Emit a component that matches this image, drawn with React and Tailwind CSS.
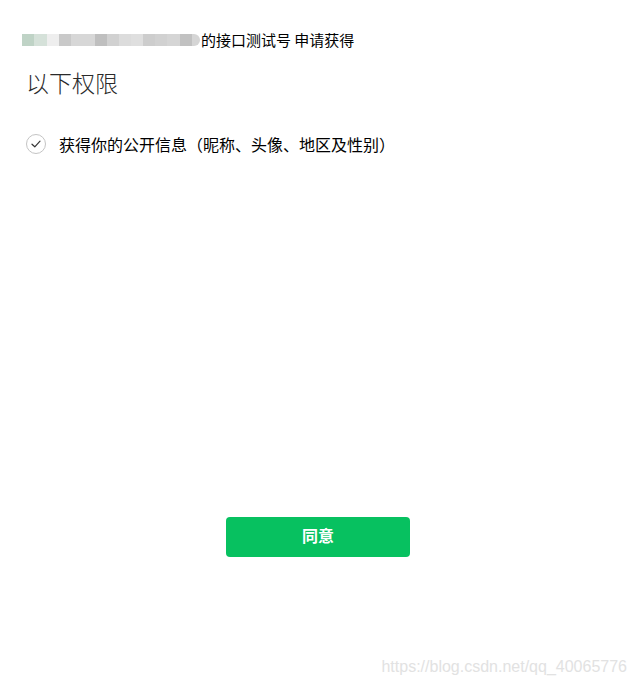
import React from 'react';

const blurBlocks = [
  ['w-[12px]', 'bg-[#bfd3c6]'],
  ['w-[13px]', 'bg-[#d5e1d9]'],
  ['w-[12px]', 'bg-[#eeeeee]'],
  ['w-[12px]', 'bg-[#c9c9c9]'],
  ['w-[24px]', 'bg-[#d7d7d7]'],
  ['w-[12px]', 'bg-[#bfbfbf]'],
  ['w-[12px]', 'bg-[#d1d1d1]'],
  ['w-[12px]', 'bg-[#dcdcdc]'],
  ['w-[12px]', 'bg-[#dfdfdf]'],
  ['w-[12px]', 'bg-[#cdcdcd]'],
  ['w-[12px]', 'bg-[#d1d1d1]'],
  ['w-[13px]', 'bg-[#d5d5d5]'],
  ['w-[12px]', 'bg-[#c1c1c1]'],
  ['w-[8px]', 'bg-[#d5d5d5] rounded-r-full'],
];

const App = () => {
  return (
    <div
      className="w-[636px] h-[687px] bg-white relative overflow-hidden text-black"
      style={{ fontFamily: '"Noto Sans CJK SC", "Noto Sans", sans-serif' }}
    >
      {/* Header line */}
      <div className="pt-[30px] pl-[22px] flex items-center h-[50px]">
        <div className="flex h-[12px] items-stretch">
          {blurBlocks.map(([w, c], i) => (
            <div key={i} className={`${w} ${c}`} />
          ))}
        </div>
        <span className="text-[15px] leading-[20px] ml-[1px]">的接口测试号 申请获得</span>
      </div>

      {/* Title */}
      <div className="pl-[26px] mt-[17px] text-[23px] leading-[30px] text-[#2a2a2a] font-light">
        以下权限
      </div>

      {/* Permission item */}
      <div className="pl-[26px] mt-[36px] flex items-center">
        <div className="w-[20px] h-[20px] rounded-full border border-[#c4c4c4] flex items-center justify-center">
          <svg width="10" height="8" viewBox="0 0 10 8" fill="none">
            <path d="M1 4.2L3.8 6.8L9 1.2" stroke="#333" strokeWidth="1.2" strokeLinecap="round" strokeLinejoin="round" />
          </svg>
        </div>
        <span className="ml-[13px] text-[16px] leading-[22px]">获得你的公开信息（昵称、头像、地区及性别）</span>
      </div>

      {/* Button */}
      <div className="flex justify-center mt-[362px]">
        <button className="w-[184px] h-[40px] pb-[5px] rounded-[4px] bg-[#07c160] text-white text-[16px] font-bold">
          同意
        </button>
      </div>

      {/* Watermark */}
      <div
        className="absolute right-[9px] bottom-[8px] text-[16px] text-[#e2e2e2]"
        style={{ fontFamily: 'Arial, "Liberation Sans", sans-serif' }}
      >
        https://blog.csdn.net/qq_40065776
      </div>
    </div>
  );
};

export default App;
